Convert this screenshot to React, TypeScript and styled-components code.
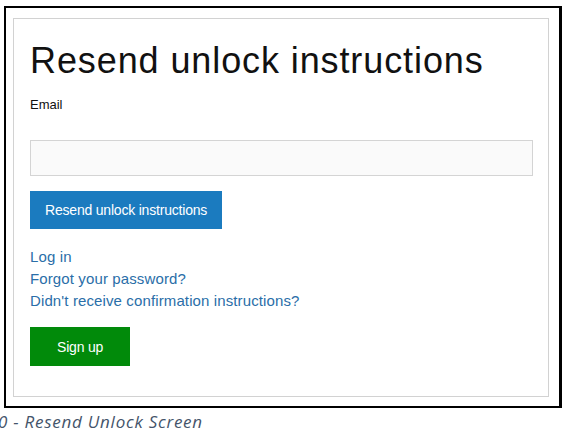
import styled, { createGlobalStyle } from 'styled-components';

const GlobalStyle = createGlobalStyle`
  html, body {
    margin: 0;
    padding: 0;
    background: #ffffff;
  }
  body {
    font-family: "Liberation Sans", Arial, sans-serif;
    overflow: hidden;
  }
`;

const Page = styled.div`
  width: 575px;
  height: 442px;
  padding: 6px 0 0 4px;
  box-sizing: border-box;
`;

const Frame = styled.div`
  width: 558px;
  height: 402px;
  box-sizing: border-box;
  border: 2px solid #000;
  border-right-width: 3px;
  padding: 10px 10px 9px 7px;
`;

const Panel = styled.div`
  height: 100%;
  box-sizing: border-box;
  border: 1px solid #d2d2d2;
  padding: 22px 15px 0 16px;
  display: flex;
  flex-direction: column;
  align-items: flex-start;
`;

const Title = styled.h1`
  margin: 0;
  font-size: 36px;
  line-height: 40px;
  letter-spacing: 0.9px;
  font-weight: 400;
  color: #111;
`;

const Label = styled.label`
  margin-top: 16px;
  font-size: 13px;
  line-height: 16px;
  color: #111;
`;

const Input = styled.input`
  margin-top: 27px;
  width: 100%;
  height: 36px;
  box-sizing: border-box;
  border: 1px solid #d4d4d4;
  background: #fafafa;
  outline: none;
`;

const Button = styled.button<{ $tone: 'blue' | 'green' }>`
  margin-top: 15px;
  height: ${(p) => (p.$tone === 'blue' ? '38px' : '39px')};
  padding: 0 ${(p) => (p.$tone === 'blue' ? '15px' : '27px')};
  border: none;
  background: ${(p) => (p.$tone === 'blue' ? '#1b7bbf' : '#018a0a')};
  color: #fff;
  font-family: "Liberation Sans", Arial, sans-serif;
  font-size: 14px;
  letter-spacing: -0.2px;
`;

const Links = styled.div`
  margin-top: 17px;
  display: flex;
  flex-direction: column;
`;

const Link = styled.a`
  font-size: 15px;
  line-height: 22px;
  letter-spacing: 0.12px;
  color: #2a6ea8;
  text-decoration: none;
`;

const Caption = styled.div`
  margin: 3px 0 0 -6px;
  font-family: "Open Sans", "Noto Sans", sans-serif;
  font-style: italic;
  font-size: 17px;
  line-height: 22px;
  letter-spacing: 0.75px;
  color: #44546a;
  white-space: nowrap;
`;

export default function App() {
  return (
    <>
      <GlobalStyle />
      <Page>
        <Frame>
          <Panel>
            <Title>Resend unlock instructions</Title>
            <Label>Email</Label>
            <Input type="email" />
            <Button $tone="blue">Resend unlock instructions</Button>
            <Links>
              <Link href="#">Log in</Link>
              <Link href="#">Forgot your password?</Link>
              <Link href="#">Didn't receive confirmation instructions?</Link>
            </Links>
            <Button $tone="green">Sign up</Button>
          </Panel>
        </Frame>
        <Caption>0 - Resend Unlock Screen</Caption>
      </Page>
    </>
  );
}
